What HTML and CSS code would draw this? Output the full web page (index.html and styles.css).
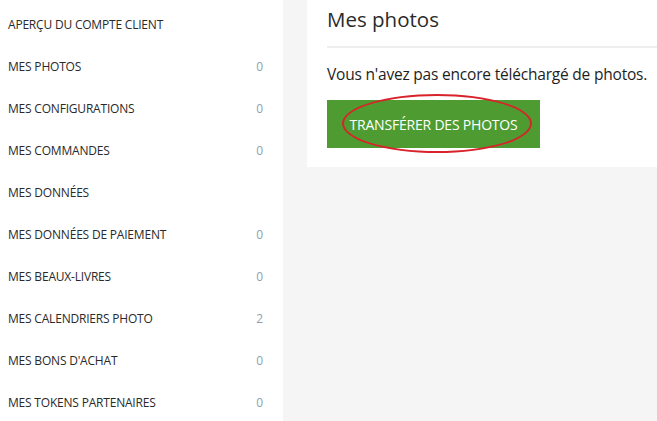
FILE: index.html
```html
<!DOCTYPE html>
<html lang="fr">
<head>
<meta charset="utf-8">
<link rel="stylesheet" href="styles.css">
</head>
<body>
<nav class="sidebar">
  <a class="nav-item"><span>APERÇU DU COMPTE CLIENT</span></a>
  <a class="nav-item"><span>MES PHOTOS</span><span class="count">0</span></a>
  <a class="nav-item"><span>MES CONFIGURATIONS</span><span class="count">0</span></a>
  <a class="nav-item"><span>MES COMMANDES</span><span class="count">0</span></a>
  <a class="nav-item"><span>MES DONNÉES</span></a>
  <a class="nav-item"><span>MES DONNÉES DE PAIEMENT</span><span class="count">0</span></a>
  <a class="nav-item"><span>MES BEAUX-LIVRES</span><span class="count">0</span></a>
  <a class="nav-item"><span>MES CALENDRIERS PHOTO</span><span class="count">2</span></a>
  <a class="nav-item"><span>MES BONS D'ACHAT</span><span class="count">0</span></a>
  <a class="nav-item"><span>MES TOKENS PARTENAIRES</span><span class="count">0</span></a>
</nav>
<main class="main">
  <section class="panel">
    <h1 class="title">Mes photos</h1>
    <p class="empty">Vous n'avez pas encore téléchargé de photos.</p>
    <div class="btn-wrap">
      <button class="btn">TRANSFÉRER DES PHOTOS</button>
      <span class="circle"></span>
    </div>
  </section>
</main>
</body>
</html>
```
FILE: styles.css
```css
html, body {
  margin: 0;
  height: 100%;
}
body {
  display: flex;
  font-family: "Open Sans", "Noto Sans", sans-serif;
  color: #333;
  background: #f5f5f5;
  overflow: hidden;
}
.sidebar {
  width: 283px;
  flex: none;
  background: #fff;
  padding-top: 3px;
  box-sizing: border-box;
}
.nav-item {
  display: flex;
  justify-content: space-between;
  align-items: center;
  height: 42px;
  padding: 0 20px 0 8px;
  font-size: 12px;
  letter-spacing: -0.2px;
  color: #2a2a2a;
}
.count {
  color: #8f9fb0;
}
.main {
  flex: 1;
  padding-left: 24px;
}
.panel {
  background: #fff;
  padding: 0 0 19px 20px;
}
.title {
  margin: 0;
  font-size: 20.5px;
  font-weight: 400;
  line-height: 38px;
  padding-bottom: 8px;
  border-bottom: 2px solid #eee;
  color: #2a2a2a;
}
.empty {
  margin: 16px 0 0;
  font-size: 15.5px;
  line-height: 20px;
  letter-spacing: -0.2px;
  color: #1e1e1e;
}
.btn-wrap {
  position: relative;
  margin-top: 16px;
  width: 213px;
}
.btn {
  display: block;
  width: 213px;
  height: 48px;
  border: 0;
  background: #4e9c31;
  color: #fff;
  font-family: inherit;
  font-size: 14px;
  letter-spacing: -0.2px;
  padding: 0;
}
.circle {
  position: absolute;
  left: 15px;
  top: -6px;
  width: 190px;
  height: 59px;
  border: 2px solid #d8232a;
  border-radius: 50%;
  box-sizing: border-box;
}
```
